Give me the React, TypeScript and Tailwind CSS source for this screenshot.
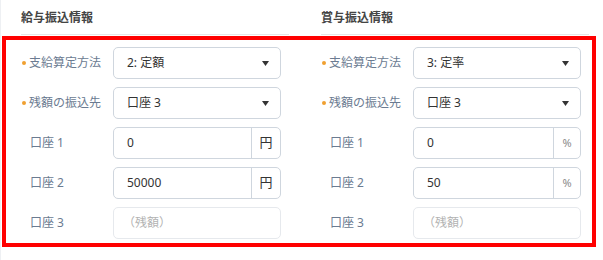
const font = "font-['Noto_Sans','Noto_Sans_CJK_JP',sans-serif]";

type Row =
  | { kind: "select"; label: string; value: string; required?: boolean }
  | { kind: "unit"; label: string; value: string; unit: string; unitDark?: boolean }
  | { kind: "empty"; label: string };

const salary: Row[] = [
  { kind: "select", label: "支給算定方法", value: "2: 定額", required: true },
  { kind: "select", label: "残額の振込先", value: "口座 3", required: true },
  { kind: "unit", label: "口座 1", value: "0", unit: "円", unitDark: true },
  { kind: "unit", label: "口座 2", value: "50000", unit: "円", unitDark: true },
  { kind: "empty", label: "口座 3" },
];

const bonus: Row[] = [
  { kind: "select", label: "支給算定方法", value: "3: 定率", required: true },
  { kind: "select", label: "残額の振込先", value: "口座 3", required: true },
  { kind: "unit", label: "口座 1", value: "0", unit: "%" },
  { kind: "unit", label: "口座 2", value: "50", unit: "%" },
  { kind: "empty", label: "口座 3" },
];

const Label = ({ text, required }: { text: string; required?: boolean }) =>
  required ? (
    <div className="w-[92px] flex items-center pl-[1px] gap-[3px] text-[12px] text-[#6b7b91]">
      <span className="w-[4px] h-[4px] rounded-full bg-[#f0a030]" />
      <span>{text}</span>
    </div>
  ) : (
    <div className="w-[92px] pl-[9px] text-[12px] text-[#6b7b91]">{text}</div>
  );

const FieldRow = ({ row, addonW }: { row: Row; addonW: string }) => (
  <div className="flex items-center h-[32px]">
    <Label text={row.label} required={row.kind === "select" && row.required} />
    {row.kind === "select" && (
      <div className="w-[168px] h-[32px] flex items-center justify-between border border-[#cfd6de] rounded-[5px] pl-[13px] pr-[11px] text-[12px] text-[#333]">
        <span>{row.value}</span>
        <svg width="7" height="5" viewBox="0 0 7 5">
          <path d="M0 0 H7 L3.5 5 Z" fill="#333" />
        </svg>
      </div>
    )}
    {row.kind === "unit" && (
      <div className="w-[168px] h-[32px] flex border border-[#cfd6de] rounded-[5px] text-[12px]">
        <div className="flex-1 flex items-center pl-[13px] text-[#333]">{row.value}</div>
        <div
          className={`${addonW} flex items-center justify-center border-l border-[#cfd6de] ${
            row.unitDark ? "text-[13px] text-[#333]" : "text-[11px] text-[#8a8a8a]"
          }`}
        >
          {row.unit}
        </div>
      </div>
    )}
    {row.kind === "empty" && (
      <div className="w-[168px] h-[32px] flex items-center border border-[#e6e9ed] rounded-[5px] pl-[9px] text-[12px] text-[#b3b3b3]">
        （残額）
      </div>
    )}
  </div>
);

export default function App() {
  return (
    <div className={`w-[603px] h-[260px] bg-white border-l border-[#eef0f3] ${font}`}>
      {/* section headings */}
      <div className="flex gap-[32px] pl-[20px]">
        <div className="w-[268px] h-[35px] pt-[10px] border-b border-[#e6e6e6] text-[12px] leading-[16px] font-bold text-[#444]">
          給与振込情報
        </div>
        <div className="w-[268px] h-[35px] pt-[10px] border-b border-[#e6e6e6] text-[12px] leading-[16px] font-bold text-[#444]">
          賞与振込情報
        </div>
      </div>

      {/* highlighted form area */}
      <div className="ml-[1px] mt-[1px] w-[594px] border-[4px] border-[#ff0000] pl-[15px] pt-[7px] pb-[4px] flex gap-[32px]">
        <div className="w-[268px] flex flex-col gap-[8px]">
          {salary.map((r) => (
            <FieldRow key={r.label} row={r} addonW="w-[29px]" />
          ))}
        </div>
        <div className="w-[268px] flex flex-col gap-[8px]">
          {bonus.map((r) => (
            <FieldRow key={r.label} row={r} addonW="w-[27px]" />
          ))}
        </div>
      </div>
    </div>
  );
}
